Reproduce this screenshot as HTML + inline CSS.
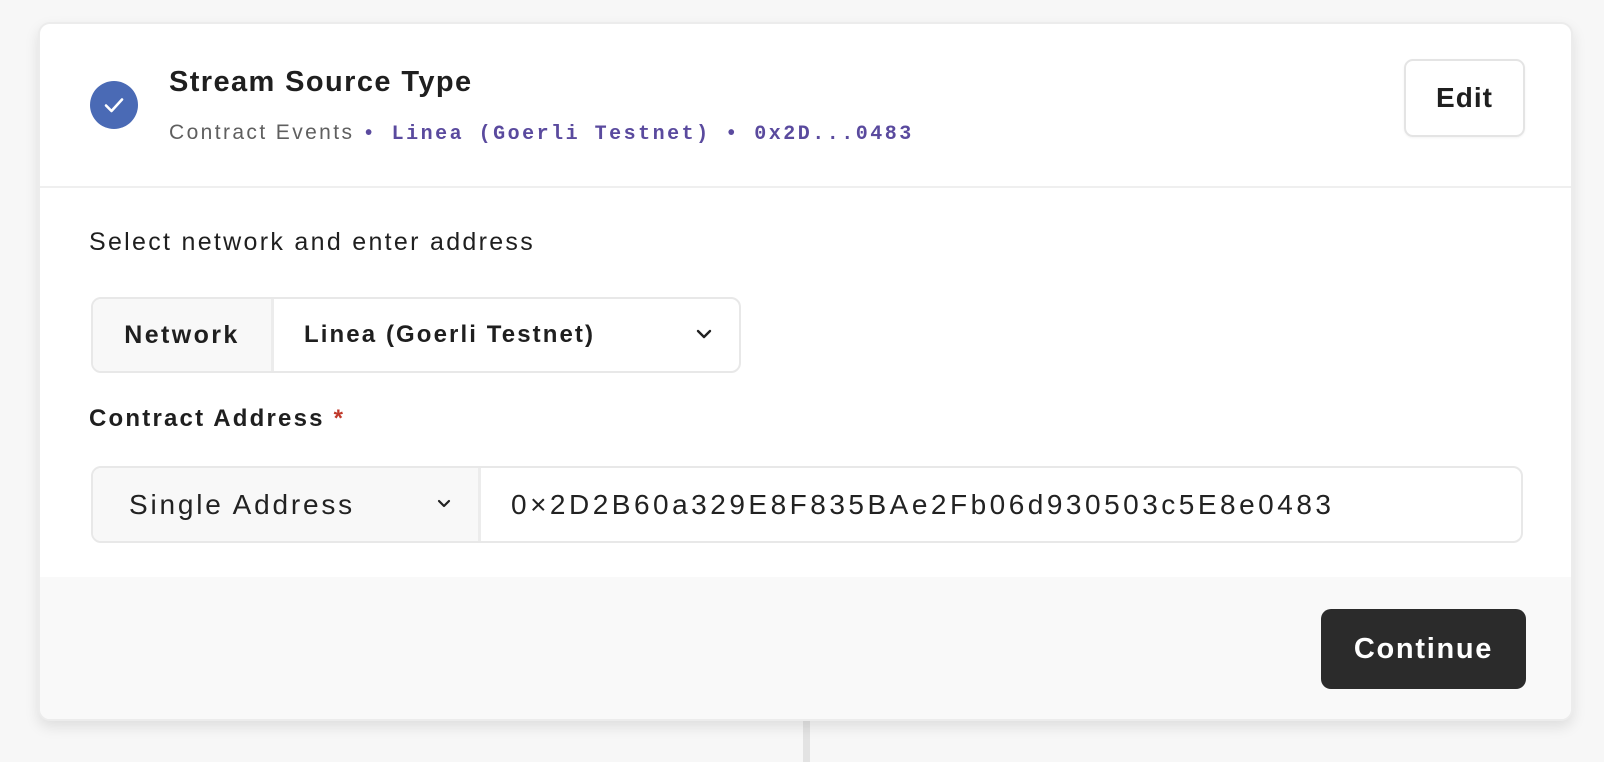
<!DOCTYPE html>
<html><head><style>
*{box-sizing:border-box;margin:0;padding:0}
body{width:1604px;height:762px;background:#f7f7f7;font-family:"Liberation Sans",sans-serif;color:#1f1f1f;position:relative;overflow:hidden}
.bar{position:absolute;left:803px;top:700px;width:7px;height:62px;background:#e3e3e3}
.card{position:absolute;left:38px;top:22px;width:1535px;height:699px;background:#fff;border:2px solid #ececec;border-radius:12px;box-shadow:0 6px 14px rgba(0,0,0,.10);overflow:hidden}
.head{position:absolute;left:0;top:0;right:0;height:164px;border-bottom:2px solid #efefef}
.chk{position:absolute;left:50px;top:57px;width:48px;height:48px;border-radius:50%;background:#4a6ab5}
.title{position:absolute;left:129px;top:42px;font-size:29px;font-weight:bold;letter-spacing:1.4px}
.sub{position:absolute;left:129px;top:97px;font-size:21px;color:#5f5f5f;white-space:nowrap;letter-spacing:2.4px}
.sub .m{font-family:"Liberation Mono",monospace;color:#5a4a9e;font-weight:bold;font-size:20px;letter-spacing:2.5px}
.edit{position:absolute;left:1364px;top:35px;width:121px;height:78px;border:2px solid #e4e4e4;border-radius:9px;font-size:28px;font-weight:bold;text-align:center;line-height:74px;box-shadow:0 1px 2px rgba(0,0,0,.05);letter-spacing:1px}
.lbl{position:absolute;left:49px;top:204px;font-size:25px;letter-spacing:2.3px}
.grp{position:absolute;border:2px solid #e8e8e8;border-radius:10px;overflow:hidden;background:#fff}
.grp .l{position:absolute;left:0;top:0;bottom:0;background:#f8f8f8;border-right:3px solid #ececec}
.ca{position:absolute;left:49px;top:381px;font-size:24px;font-weight:bold;letter-spacing:2.2px}
.ca span{color:#c0392b}
.foot{position:absolute;left:0;right:0;top:553px;bottom:0;background:#f9f9f9}
.cont{position:absolute;left:1281px;top:585px;width:205px;height:80px;background:#2b2b2b;border-radius:10px;color:#fff;font-size:29px;font-weight:bold;text-align:center;line-height:80px;letter-spacing:1.7px}
</style></head><body>
<div class="bar"></div>
<div class="card">
 <div class="head">
  <div class="chk"><svg width="48" height="48" viewBox="0 0 48 48"><path d="M16 24.5l5.5 5.5L32 18.5" fill="none" stroke="#fff" stroke-width="2.6" stroke-linecap="round" stroke-linejoin="round"/></svg></div>
  <div class="title">Stream Source Type</div>
  <div class="sub">Contract Events <span class="m">• Linea (Goerli Testnet) • 0x2D...0483</span></div>
  <div class="edit">Edit</div>
 </div>
 <div class="lbl">Select network and enter address</div>
 <div class="grp" style="left:51px;top:273px;width:650px;height:76px">
  <div class="l" style="width:181px"></div>
  <div style="position:absolute;left:0;width:178px;top:0;line-height:72px;text-align:center;font-size:25px;font-weight:bold;letter-spacing:2.4px">Network</div>
  <div style="position:absolute;left:211px;top:0;line-height:72px;font-size:24px;font-weight:bold;letter-spacing:2.1px">Linea (Goerli Testnet)</div>
  <svg style="position:absolute;left:602px;top:28px" width="18" height="14" viewBox="0 0 18 14"><path d="M3 4l6 6 6-6" fill="none" stroke="#222" stroke-width="2.4" stroke-linecap="round" stroke-linejoin="round"/></svg>
 </div>
 <div class="ca">Contract Address <span>*</span></div>
 <div class="grp" style="left:51px;top:442px;width:1432px;height:77px">
  <div class="l" style="width:388px"></div>
  <div style="position:absolute;left:36px;top:0;line-height:73px;font-size:28px;color:#222;letter-spacing:2.8px">Single Address</div>
  <svg style="position:absolute;left:343px;top:30px" width="16" height="12" viewBox="0 0 16 12"><path d="M3 3l5 5 5-5" fill="none" stroke="#222" stroke-width="2.2" stroke-linecap="round" stroke-linejoin="round"/></svg>
  <div style="position:absolute;left:418px;top:0;line-height:73px;font-size:28px;color:#222;letter-spacing:3.5px">0×2D2B60a329E8F835BAe2Fb06d930503c5E8e0483</div>
 </div>
 <div class="foot"></div>
 <div class="cont">Continue</div>
</div>
</body></html>
